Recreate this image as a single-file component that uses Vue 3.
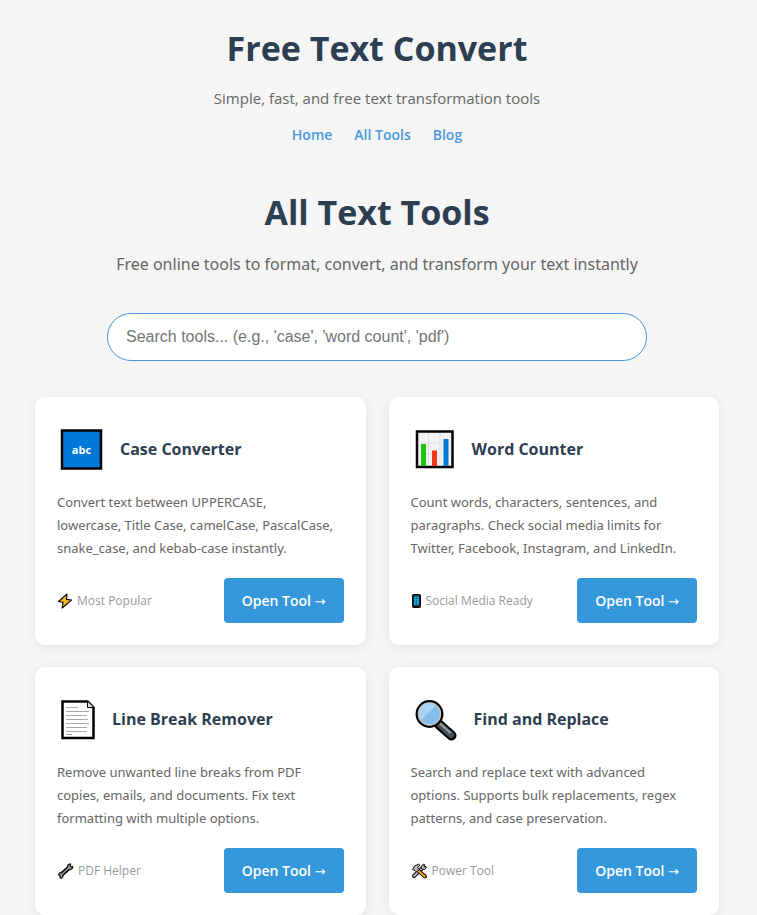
<template>
  <div class="page">
    <header class="site-header">
      <h1>Free Text Convert</h1>
      <p class="tagline">Simple, fast, and free text transformation tools</p>
      <nav>
        <a href="#">Home</a>
        <a href="#">All Tools</a>
        <a href="#">Blog</a>
      </nav>
    </header>

    <main>
      <h1>All Text Tools</h1>
      <p class="intro">Free online tools to format, convert, and transform your text instantly</p>

      <div class="search">
        <input
          v-model="query"
          type="text"
          aria-label="Search tools"
          placeholder="Search tools... (e.g., 'case', 'word count', 'pdf')"
        />
      </div>

      <div class="tools-grid">
        <article v-for="tool in filteredTools" :key="tool.id" class="card">
          <div class="card-header">
            <svg v-if="tool.id === 'case'" class="icon" width="49" height="48" viewBox="0 0 49 48">
              <rect x="5" y="5.500" width="39" height="38" fill="#0078d7" stroke="#000" stroke-width="2.500" />
              <text x="24.500" y="29" text-anchor="middle" class="abc">abc</text>
            </svg>
            <svg v-else-if="tool.id === 'words'" class="icon" width="47" height="48" viewBox="0 0 47 48">
              <rect x="6" y="6.500" width="35.500" height="35.500" fill="#f2f2f2" stroke="#000" stroke-width="2.500" />
              <path d="M17.500 8v33M29 8v33M7 18h33M7 29h33" stroke="#e0dde0" fill="none" />
              <path d="M10 19h5v22h-5z" fill="#16c60c" />
              <path d="M21 25.500h5V41h-5z" fill="#f03a17" />
              <path d="M32.500 14h5v27h-5z" fill="#0078d7" />
            </svg>
            <svg v-else-if="tool.id === 'lines'" class="icon" width="41" height="48" viewBox="0 0 41 48">
              <path d="M5.500 6.500h25l6 6v30.500h-31z" fill="#fff" stroke="#000" stroke-width="2.500" />
              <path d="M30.500 6.500v6h6" fill="#ddd" stroke="#000" stroke-width="1" />
              <path
                d="M9 12.500h12M9 16.500h23M9 20.500h21M9 24.500h22M9 28.500h23M9 32.500h21M9 36.500h21M9 39.500h6"
                stroke="#aaa"
                fill="none"
              />
            </svg>
            <svg v-else class="icon" width="49" height="48" viewBox="0 0 49 48">
              <path d="M28 29.500l12.500 11" stroke="#000" stroke-width="10" stroke-linecap="round" />
              <path d="M29.500 30.500l10.500 9.500" stroke="#4c5356" stroke-width="6" stroke-linecap="round" />
              <path d="M29 28.500l10 9" stroke="#9a9fa2" stroke-width="2" stroke-linecap="round" />
              <circle cx="18.500" cy="19" r="12.700" fill="#83beec" stroke="#000" stroke-width="2.500" />
              <circle cx="18.500" cy="19" r="11" fill="none" stroke="#c9c3ba" stroke-width="1.500" />
              <path d="M10 25a10.500 10.500 0 0 1 15-14.500z" fill="#a9d3f5" />
            </svg>
            <h2>{{ tool.name }}</h2>
          </div>
          <p class="description">{{ tool.description }}</p>
          <div class="card-footer">
            <span class="tag">
              <svg v-if="tool.id === 'case'" width="16" height="16" viewBox="0 0 16 16">
                <path
                  d="M10 1L1.500 8.500l4.500.8-.8 5.700L14.500 7 9.500 6.300z"
                  fill="#fdb827"
                  stroke="#111"
                  stroke-width="1.200"
                  stroke-linejoin="round"
                />
              </svg>
              <svg v-else-if="tool.id === 'words'" width="11" height="16" viewBox="0 0 11 16">
                <rect x="1.500" y="1.500" width="8" height="13" rx="1" fill="#222" stroke="#000" />
                <path d="M3 3.500h5v8.500H3z" fill="#00b4f0" />
                <path d="M3 5.500h5M3 8h5M3 10.500h5M5.500 3.500V12" stroke="#145a75" stroke-width=".6" />
              </svg>
              <svg v-else-if="tool.id === 'lines'" width="17" height="16" viewBox="0 0 17 16">
                <path d="M4.500 11.500l8-7" stroke="#111" stroke-width="4.500" />
                <path
                  d="M1.500 11.500l1-1.500 2-.3 6-5.400.2-2 1.600-1.300h1.400l-.5 2 1 .9 1.600-.3-.3 1.500-1.500 1.300-2 .1-6 5.400-.2 2-1.500 1.300-1.300-.2.400-1.800-1-.9z"
                  fill="#9a9a9a"
                  stroke="#111"
                  stroke-width="1.200"
                  stroke-linejoin="round"
                />
              </svg>
              <svg v-else width="17" height="16" viewBox="0 0 17 16">
                <path d="M3 13L12.500 4" stroke="#111" stroke-width="4" stroke-linecap="round" />
                <path d="M3 13L12.500 4" stroke="#bbb" stroke-width="1.800" stroke-linecap="round" />
                <path
                  d="M10.500 5.500l-.3-2.500 2-1.700 1.500.2-1 1.500.8 1 1.700-.6-.2 1.800-2 1.500z"
                  fill="#ccc"
                  stroke="#111"
                  stroke-linejoin="round"
                />
                <path d="M6.500 7l7.500 6.500" stroke="#111" stroke-width="4" stroke-linecap="round" />
                <path d="M7 7.500l6.800 6" stroke="#f2a20d" stroke-width="2.200" stroke-linecap="round" />
                <path d="M1.500 6.500L3.500 3l4-1.700 1.500 1L6.500 4.500l1.500 2L5.500 9 4 7.500z" fill="#bbb" stroke="#111" />
              </svg>
              {{ tool.tag }}
            </span>
            <a href="#" class="open-button">Open Tool <span class="arrow">→</span></a>
          </div>
        </article>
      </div>
    </main>
  </div>
</template>

<script setup>
import { computed, ref } from 'vue'

const query = ref('')

const tools = [
  {
    id: 'case',
    name: 'Case Converter',
    description:
      'Convert text between UPPERCASE,\nlowercase, Title Case, camelCase, PascalCase, snake_case, and kebab-case instantly.',
    tag: 'Most Popular',
  },
  {
    id: 'words',
    name: 'Word Counter',
    description:
      'Count words, characters, sentences, and paragraphs. Check social media limits for Twitter, Facebook, Instagram, and LinkedIn.',
    tag: 'Social Media Ready',
  },
  {
    id: 'lines',
    name: 'Line Break Remover',
    description:
      'Remove unwanted line breaks from PDF copies, emails, and documents. Fix text formatting with multiple options.',
    tag: 'PDF Helper',
  },
  {
    id: 'replace',
    name: 'Find and Replace',
    description:
      'Search and replace text with advanced options. Supports bulk replacements, regex patterns, and case preservation.',
    tag: 'Power Tool',
  },
]

const filteredTools = computed(() => {
  const q = query.value.trim().toLowerCase()
  return tools.filter((t) => (t.name + ' ' + t.description).toLowerCase().includes(q))
})
</script>

<style>
body {
  margin: 0;
  background: #f5f5f5;
}
</style>

<style scoped>
.page {
  font-family: 'Segoe UI', 'Open Sans', 'Noto Sans', sans-serif;
  color: #666;
  padding: 22px 38px 0 35px;
}

h1,
h2,
p {
  margin: 0;
}

h1 {
  font-size: 34px;
  line-height: 52px;
  font-weight: 700;
  color: #2c3e50;
}

.site-header {
  text-align: center;
  margin-bottom: 40px;
}

.tagline {
  margin-top: 12px;
  font-size: 15px;
  line-height: 24px;
}

nav {
  display: flex;
  justify-content: center;
  gap: 22px;
  margin-top: 14px;
}

nav a {
  font-size: 14px;
  line-height: 22px;
  font-weight: 600;
  color: #4a98dc;
  text-decoration: none;
}

main {
  text-align: center;
}

.intro {
  margin-top: 12px;
  font-family: 'Segoe UI', 'Noto Sans', sans-serif;
  font-size: 16px;
  line-height: 28px;
}

.search {
  max-width: 540px;
  margin: 35px auto 36px;
}

.search input {
  box-sizing: border-box;
  width: 100%;
  height: 48px;
  padding: 0 18px;
  border: 1px solid #4a98dc;
  border-radius: 24px;
  background: #fff;
  font-family: 'Liberation Sans', sans-serif;
  font-size: 16px;
  outline: none;
}

.search input::placeholder {
  color: #757575;
}

.tools-grid {
  display: grid;
  grid-template-columns: repeat(auto-fit, minmax(300px, 1fr));
  gap: 22px 23px;
  text-align: left;
}

.card {
  padding: 22px;
  border-radius: 10px;
  background: #fff;
  box-shadow: 0 2px 12px rgba(0, 0, 0, 0.08);
}

.card-header {
  display: flex;
  align-items: center;
  gap: 14px;
  height: 60px;
}

.icon {
  flex: none;
}

.abc {
  font-size: 11px;
  font-weight: 700;
  fill: #fff;
}

h2 {
  font-size: 16px;
  line-height: 24px;
  font-weight: 700;
  color: #2c3e50;
}

.description {
  margin-top: 12px;
  font-family: 'Segoe UI', 'Noto Sans', sans-serif;
  font-size: 13px;
  line-height: 23px;
  white-space: pre-line;
}

.card-footer {
  display: flex;
  justify-content: space-between;
  align-items: center;
  margin-top: 18px;
}

.tag {
  display: flex;
  align-items: center;
  gap: 4px;
  font-size: 12px;
  color: #999;
}

.open-button {
  padding: 11px 18px;
  border-radius: 4px;
  background: #3498db;
  color: #fff;
  font-size: 14px;
  line-height: 23px;
  font-weight: 600;
  text-decoration: none;
  white-space: nowrap;
}

.arrow {
  font-family: 'DejaVu Sans', sans-serif;
  font-size: 13px;
  line-height: 1;
  font-weight: 400;
}
</style>
